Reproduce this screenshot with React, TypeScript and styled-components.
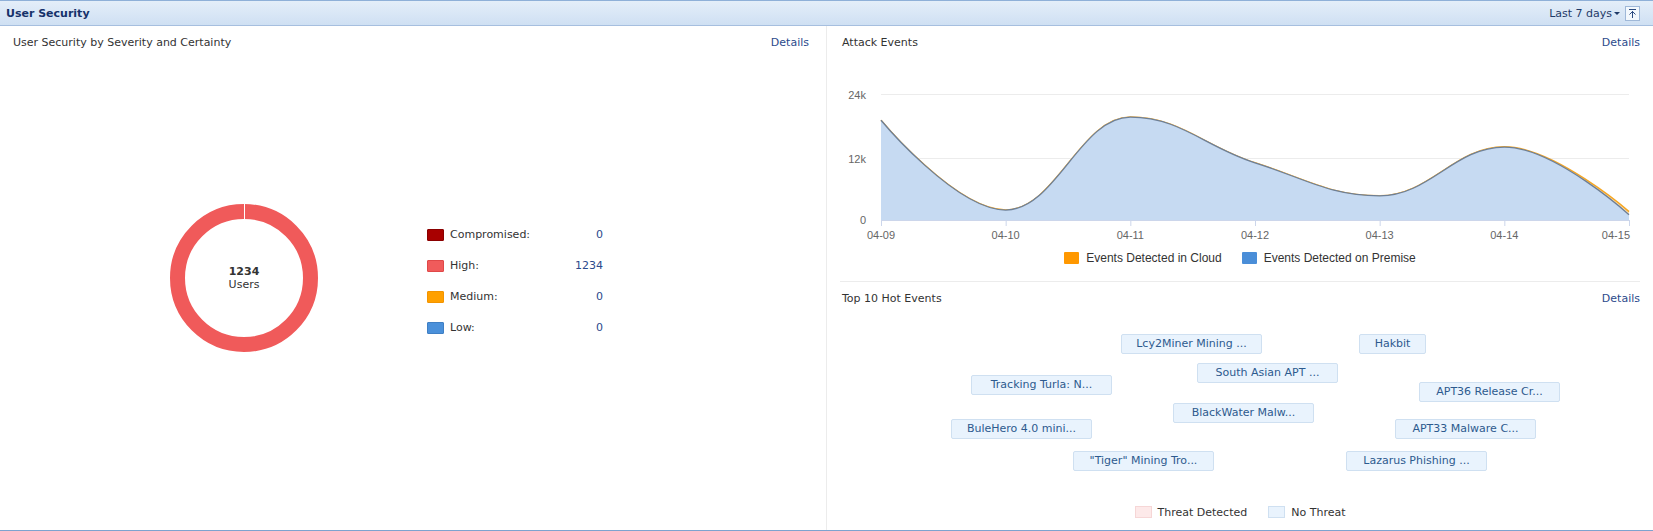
import styled, { createGlobalStyle } from 'styled-components';

const GlobalStyle = createGlobalStyle`
  html, body { margin: 0; padding: 0; background: #ffffff; }
  body { font-family: "DejaVu Sans", Verdana, sans-serif; font-size: 11px; color: #333333; }
`;

interface Severity {
  label: string;
  value: number;
  color: string;
  border: string;
}

interface HotEvent {
  name: string;
  left: number;
  top: number;
  width: number;
}

const severities: Severity[] = [
  { label: 'Compromised:', value: 0, color: '#a80000', border: '#8a0000' },
  { label: 'High:', value: 1234, color: '#f05b5b', border: '#e04848' },
  { label: 'Medium:', value: 0, color: '#ffa000', border: '#f39400' },
  { label: 'Low:', value: 0, color: '#4a90da', border: '#3f7fc4' },
];

const hotEvents: HotEvent[] = [
  { name: 'Lcy2Miner Mining ...', left: 281, top: 28, width: 141 },
  { name: 'Hakbit', left: 519, top: 28, width: 67 },
  { name: 'South Asian APT ...', left: 357, top: 57, width: 141 },
  { name: 'Tracking Turla: N...', left: 131, top: 69, width: 141 },
  { name: 'APT36 Release Cr...', left: 579, top: 76, width: 141 },
  { name: 'BlackWater Malw...', left: 333, top: 97, width: 141 },
  { name: 'BuleHero 4.0 mini...', left: 111, top: 113, width: 141 },
  { name: 'APT33 Malware C...', left: 555, top: 113, width: 141 },
  { name: '"Tiger" Mining Tro...', left: 233, top: 145, width: 141 },
  { name: 'Lazarus Phishing ...', left: 506, top: 145, width: 141 },
];

// chart geometry (svg coordinates)
const PLOT_LEFT = 41;
const PLOT_RIGHT = 789;
const BASE_Y = 140;
const dates = ['04-09', '04-10', '04-11', '04-12', '04-13', '04-14', '04-15'];
const premise = [19.0, 1.9, 19.6, 10.9, 4.6, 13.9, 1.0];
const cloud = [0, 0, 0, 0, 0, 0.05, 0.6];
const yFor = (v: number) => BASE_Y - (v / 24) * 126;
const xFor = (i: number) => PLOT_LEFT + ((PLOT_RIGHT - PLOT_LEFT) / 6) * i;

type Pt = { x: number; y: number };

function splinePath(pts: Pt[]): string {
  const s = 1.5;
  const d = s + 1;
  const left: (Pt | null)[] = [];
  const right: (Pt | null)[] = [];
  pts.forEach((p, i) => {
    if (i === 0 || i === pts.length - 1) {
      left.push(null);
      right.push(null);
      return;
    }
    const a = pts[i - 1];
    const b = pts[i + 1];
    const lx = (s * p.x + a.x) / d;
    let ly = (s * p.y + a.y) / d;
    const rx = (s * p.x + b.x) / d;
    let ry = (s * p.y + b.y) / d;
    const c = ((ry - ly) * (rx - p.x)) / (rx - lx) + p.y - ry;
    ly += c;
    ry += c;
    if (ly > a.y && ly > p.y) {
      ly = Math.max(a.y, p.y);
      ry = 2 * p.y - ly;
    } else if (ly < a.y && ly < p.y) {
      ly = Math.min(a.y, p.y);
      ry = 2 * p.y - ly;
    }
    if (ry > b.y && ry > p.y) {
      ry = Math.max(b.y, p.y);
      ly = 2 * p.y - ry;
    } else if (ry < b.y && ry < p.y) {
      ry = Math.min(b.y, p.y);
      ly = 2 * p.y - ry;
    }
    left.push({ x: lx, y: ly });
    right.push({ x: rx, y: ry });
  });
  let path = `M ${pts[0].x} ${pts[0].y}`;
  for (let i = 1; i < pts.length; i++) {
    const r = right[i - 1] ?? pts[i - 1];
    const l = left[i] ?? pts[i];
    path += ` C ${r.x} ${r.y} ${l.x} ${l.y} ${pts[i].x} ${pts[i].y}`;
  }
  return path;
}

const premisePts = premise.map((v, i) => ({ x: xFor(i), y: yFor(v) }));
const cloudPts = premise.map((v, i) => ({ x: xFor(i), y: yFor(v + cloud[i]) }));
const premiseLine = splinePath(premisePts);
const cloudLine = splinePath(cloudPts);
const closeArea = (line: string) =>
  `${line} L ${PLOT_RIGHT} ${BASE_Y} L ${PLOT_LEFT} ${BASE_Y} Z`;

// Estilos
const Widget = styled.div`
  width: 100%;
  height: 531px;
  box-sizing: border-box;
  border-bottom: 1px solid #7ea3cf;
  display: flex;
  flex-direction: column;
`;

const Header = styled.header`
  height: 24px;
  border-top: 1px solid #8fb0d8;
  border-bottom: 1px solid #a6bfdf;
  background: linear-gradient(#e4eef9, #cfe0f3);
  display: flex;
  align-items: center;
  justify-content: space-between;
  padding: 0 13px 0 6px;
`;

const HeaderTitle = styled.span`
  font-weight: bold;
  font-size: 11px;
  color: #16326a;
`;

const HeaderTools = styled.div`
  display: flex;
  align-items: center;
  gap: 5px;
  color: #1f3a68;
`;

const RangePicker = styled.span`
  display: flex;
  align-items: center;
  gap: 2px;
  font-size: 11px;
`;

const Caret = styled.span`
  width: 0;
  height: 0;
  border-left: 3px solid transparent;
  border-right: 3px solid transparent;
  border-top: 3px solid #1f3a68;
`;

const IconBox = styled.span`
  width: 13px;
  height: 13px;
  border: 1px solid #9fb8d8;
  background: #f3f8fd;
  display: flex;
  align-items: center;
  justify-content: center;
`;

const Body = styled.div`
  flex: 1;
  display: grid;
  grid-template-columns: 827px 1fr;
`;

const LeftPanel = styled.section`
  border-right: 1px solid #ececec;
  padding: 0 17px 0 13px;
  display: flex;
  flex-direction: column;
`;

const RightPanel = styled.section`
  padding: 0 13px;
  display: flex;
  flex-direction: column;
`;

const TitleRow = styled.div<{ $inset?: number }>`
  display: flex;
  justify-content: space-between;
  align-items: center;
  margin-top: 8px;
  height: 16px;
  padding-left: ${(p) => p.$inset ?? 0}px;
`;

const PanelTitle = styled.span`
  font-size: 11px;
  color: #333333;
`;

const DetailsLink = styled.a`
  font-size: 11px;
  color: #2c4a8c;
  text-decoration: none;
  cursor: pointer;
`;

const SeverityContent = styled.div`
  display: flex;
  align-items: center;
  padding: 154px 0 0 157px;
  gap: 109px;
`;

const DonutWrap = styled.div`
  position: relative;
  width: 148px;
  height: 148px;
`;

const DonutLabel = styled.div`
  position: absolute;
  inset: 0;
  display: flex;
  flex-direction: column;
  align-items: center;
  justify-content: center;
  font-size: 11px;
  line-height: 13px;
  color: #333333;
`;

const DonutCount = styled.b`
  font-weight: bold;
`;

const Legend = styled.ul`
  list-style: none;
  margin: 6px 0 0;
  padding: 0;
  width: 176px;
  display: flex;
  flex-direction: column;
  gap: 15px;
`;

const LegendRow = styled.li`
  display: flex;
  align-items: center;
  height: 16px;
`;

const Swatch = styled.span<{ $color: string; $border: string }>`
  width: 15px;
  height: 10px;
  background: ${(p) => p.$color};
  border: 1px solid ${(p) => p.$border};
  border-radius: 1px;
  margin-right: 6px;
`;

const LegendLabel = styled.span`
  flex: 1;
  color: #333333;
`;

const LegendValue = styled.span`
  color: #2c4a8c;
`;

const AttackSection = styled.div`
  border-bottom: 1px solid #ececec;
  padding-bottom: 15px;
  display: flex;
  flex-direction: column;
`;

const ChartSvg = styled.svg`
  display: block;
  margin-top: 30px;
  font-family: "Liberation Sans", Arial, sans-serif;
`;

const ChartLegend = styled.div`
  height: 16px;
  display: flex;
  justify-content: center;
  align-items: center;
  gap: 20px;
  font-family: "Liberation Sans", Arial, sans-serif;
  font-size: 12px;
  color: #333333;
`;

const ChartLegendItem = styled.span`
  display: flex;
  align-items: center;
  gap: 7px;
`;

const ChartSwatch = styled.span<{ $color: string }>`
  width: 15px;
  height: 12px;
  border-radius: 1px;
  background: ${(p) => p.$color};
`;

const HotSection = styled.div`
  flex: 1;
  display: flex;
  flex-direction: column;
  padding-bottom: 10px;
`;

const TagCanvas = styled.div`
  position: relative;
  height: 198px;
`;

const Tag = styled.span`
  position: absolute;
  height: 18px;
  box-sizing: content-box;
  border: 1px solid #cfe0f1;
  border-radius: 2px;
  background: #e9f3fd;
  color: #2d5a8e;
  font-size: 11px;
  line-height: 18px;
  text-align: center;
  white-space: nowrap;
`;

const ThreatLegend = styled.div`
  height: 16px;
  display: flex;
  justify-content: center;
  align-items: center;
  gap: 21px;
`;

const ThreatItem = styled.span`
  display: flex;
  align-items: center;
  gap: 6px;
  color: #333333;
`;

const ThreatSwatch = styled.span<{ $bg: string; $border: string }>`
  width: 15px;
  height: 10px;
  background: ${(p) => p.$bg};
  border: 1px solid ${(p) => p.$border};
`;

function Donut() {
  return (
    <DonutWrap>
      <svg width="148" height="148" viewBox="0 0 148 148">
        <circle cx="74" cy="74" r="66.5" fill="none" stroke="#f05a5a" strokeWidth="15" />
        <line x1="74.5" y1="0" x2="74.5" y2="16" stroke="#ffffff" strokeWidth="1" />
      </svg>
      <DonutLabel>
        <DonutCount>1234</DonutCount>
        <span>Users</span>
      </DonutLabel>
    </DonutWrap>
  );
}

function AttackChart() {
  const last = dates.length - 1;
  return (
    <ChartSvg width="800" height="170" viewBox="0 0 800 170">
      <line x1={PLOT_LEFT} y1="14.5" x2={PLOT_RIGHT} y2="14.5" stroke="#ececec" />
      <line x1={PLOT_LEFT} y1="78.5" x2={PLOT_RIGHT} y2="78.5" stroke="#ececec" />
      <text x="26" y="19" textAnchor="end" fontSize="11" fill="#666666">24k</text>
      <text x="26" y="83" textAnchor="end" fontSize="11" fill="#666666">12k</text>
      <text x="26" y="144" textAnchor="end" fontSize="11" fill="#666666">0</text>

      <path d={closeArea(cloudLine)} fill="#ffd9a0" fillOpacity="0.8" />
      <path d={cloudLine} fill="none" stroke="#f5a623" strokeWidth="1.5" />
      <path d={closeArea(premiseLine)} fill="#c6daf2" />
      <path d={premiseLine} fill="none" stroke="#6d7f96" strokeWidth="1.3" />

      <line x1={PLOT_LEFT} y1={BASE_Y + 0.5} x2={PLOT_RIGHT} y2={BASE_Y + 0.5} stroke="#ccd6eb" />
      {dates.map((d, i) => (
        <g key={d}>
          <line
            x1={xFor(i) + 0.5}
            y1={BASE_Y}
            x2={xFor(i) + 0.5}
            y2={BASE_Y + 6}
            stroke="#ccd6eb"
          />
          <text
            x={i === last ? PLOT_RIGHT + 1 : xFor(i)}
            y="159"
            textAnchor={i === last ? 'end' : 'middle'}
            fontSize="11"
            fill="#666666"
          >
            {d}
          </text>
        </g>
      ))}
    </ChartSvg>
  );
}

function CollapseIcon() {
  return (
    <svg width="9" height="10" viewBox="0 0 9 10">
      <line x1="1" y1="1.5" x2="8" y2="1.5" stroke="#2b4a80" strokeWidth="1" />
      <line x1="4.5" y1="3" x2="4.5" y2="10" stroke="#2b4a80" strokeWidth="1" />
      <path d="M1.5 6.5 L4.5 3.5 L7.5 6.5" fill="none" stroke="#2b4a80" strokeWidth="1" />
    </svg>
  );
}

function App() {
  return (
    <>
      <GlobalStyle />
      <Widget>
        <Header>
          <HeaderTitle>User Security</HeaderTitle>
          <HeaderTools>
            <RangePicker>
              Last 7 days
              <Caret />
            </RangePicker>
            <IconBox>
              <CollapseIcon />
            </IconBox>
          </HeaderTools>
        </Header>
        <Body>
          <LeftPanel>
            <TitleRow>
              <PanelTitle>User Security by Severity and Certainty</PanelTitle>
              <DetailsLink>Details</DetailsLink>
            </TitleRow>
            <SeverityContent>
              <Donut />
              <Legend>
                {severities.map((s) => (
                  <LegendRow key={s.label}>
                    <Swatch $color={s.color} $border={s.border} />
                    <LegendLabel>{s.label}</LegendLabel>
                    <LegendValue>{s.value}</LegendValue>
                  </LegendRow>
                ))}
              </Legend>
            </SeverityContent>
          </LeftPanel>
          <RightPanel>
            <AttackSection>
              <TitleRow $inset={2}>
                <PanelTitle>Attack Events</PanelTitle>
                <DetailsLink>Details</DetailsLink>
              </TitleRow>
              <AttackChart />
              <ChartLegend>
                <ChartLegendItem>
                  <ChartSwatch $color="#ff9800" />
                  Events Detected in Cloud
                </ChartLegendItem>
                <ChartLegendItem>
                  <ChartSwatch $color="#4a8ed8" />
                  Events Detected on Premise
                </ChartLegendItem>
              </ChartLegend>
            </AttackSection>
            <HotSection>
              <TitleRow $inset={2}>
                <PanelTitle>Top 10 Hot Events</PanelTitle>
                <DetailsLink>Details</DetailsLink>
              </TitleRow>
              <TagCanvas>
                {hotEvents.map((e) => (
                  <Tag key={e.name} style={{ left: e.left, top: e.top, width: e.width - 2 }}>
                    {e.name}
                  </Tag>
                ))}
              </TagCanvas>
              <ThreatLegend>
                <ThreatItem>
                  <ThreatSwatch $bg="#fde9e9" $border="#f6d6d6" />
                  Threat Detected
                </ThreatItem>
                <ThreatItem>
                  <ThreatSwatch $bg="#e9f3fd" $border="#cfe0f1" />
                  No Threat
                </ThreatItem>
              </ThreatLegend>
            </HotSection>
          </RightPanel>
        </Body>
      </Widget>
    </>
  );
}

export default App;
